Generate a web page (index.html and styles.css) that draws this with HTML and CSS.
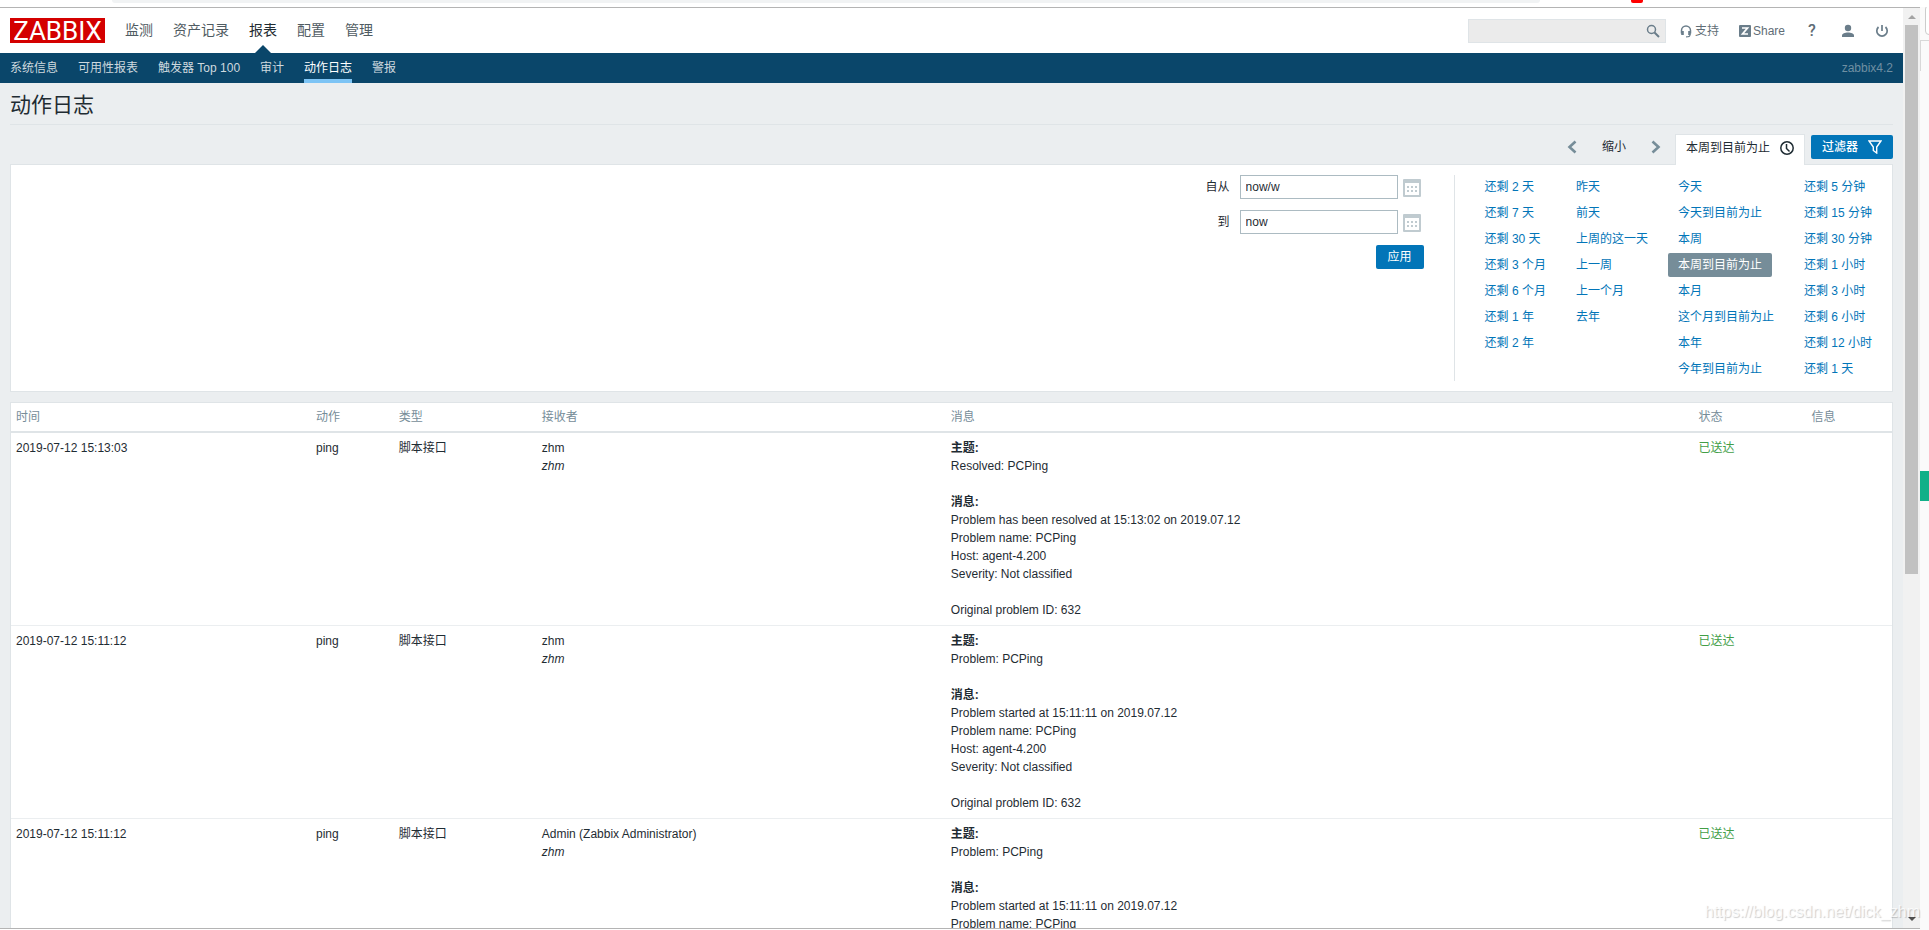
FILE: index.html
```html
<!DOCTYPE html>
<html lang="zh-CN">
<head>
<meta charset="utf-8">
<title>动作日志</title>
<link rel="stylesheet" href="styles.css">
</head>
<body>
<div class="browser-bar"><div class="address"></div><span class="ext-badge"></span></div>
<div class="screen">
  <div class="viewport">
    <div class="page">
      <header class="header">
        <a class="logo" href="#">ZABBIX</a>
        <nav class="menu">
          <a href="#">监测</a>
          <a href="#">资产记录</a>
          <a class="selected" href="#">报表</a>
          <a href="#">配置</a>
          <a href="#">管理</a>
        </nav>
        <form class="search">
          <input type="text" aria-label="搜索">
          <button type="button" aria-label="搜索"><svg width="14" height="14" viewBox="0 0 14 14" fill="none" stroke="#6a7d8a"><circle cx="5.5" cy="5.5" r="4" stroke-width="1.5"/><path d="M8.5 8.5L13 13" stroke-width="2"/></svg></button>
        </form>
        <nav class="user-menu">
          <a href="#"><svg width="12" height="14" viewBox="0 0 12 14" fill="none" stroke="#6a7d8a"><path d="M1.500 9.500V6.500a4.500 4.500 0 0 1 9 0v3" stroke-width="1.500"/><path d="M2.500 7v4M9.500 7v4" stroke-width="2.600"/><path d="M10 11C10 12.800 8.500 12.900 6 12.900" stroke-width="1.200"/></svg>支持</a>
          <a class="share" href="#"><svg width="12" height="12" viewBox="0 0 12 12"><rect width="12" height="12" rx="1" fill="#6a7d8a"/><path d="M3 3h5.500L3.500 9H9" fill="none" stroke="#fff" stroke-width="1.700"/></svg>Share</a>
          <a class="help" href="#">?</a>
          <a href="#" aria-label="用户"><svg width="14" height="14" viewBox="0 0 14 14" fill="#6a7d8a"><circle cx="7" cy="4" r="3.200"/><path d="M1 13v-1.500C1 9.500 4 8.500 7 8.500s6 1 6 3V13z"/></svg></a>
          <a href="#" aria-label="退出"><svg width="14" height="14" viewBox="0 0 14 14" fill="none" stroke="#6a7d8a" stroke-width="1.700"><path d="M3.500 3a5.200 5.200 0 1 0 7 0M7 1v6"/></svg></a>
        </nav>
      </header>
      <nav class="submenu">
        <a href="#">系统信息</a>
        <a href="#">可用性报表</a>
        <a href="#">触发器 Top 100</a>
        <a href="#">审计</a>
        <a class="selected" href="#">动作日志</a>
        <a href="#">警报</a>
        <span class="server">zabbix4.2</span>
      </nav>
      <main class="content">
        <h1>动作日志</h1>
        <div class="tabs">
          <button class="arrow" type="button" aria-label="向前"><svg width="10" height="14" viewBox="0 0 10 14"><path d="M8.500 1.500L2.500 7l6 5.500" fill="none" stroke="#768d99" stroke-width="2.600"/></svg></button>
          <button class="zoom-out" type="button">缩小</button>
          <button class="arrow" type="button" aria-label="向后"><svg width="10" height="14" viewBox="0 0 10 14"><path d="M1.500 1.500L7.500 7l-6 5.500" fill="none" stroke="#768d99" stroke-width="2.600"/></svg></button>
          <a class="tab-time" href="#">本周到目前为止<svg width="14" height="14" viewBox="0 0 14 14" fill="none" stroke="#1f2c33" stroke-width="1.500"><circle cx="7" cy="7" r="6.200"/><path d="M6.500 3v4.500L9.500 10.500"/></svg></a>
          <a class="tab-filter" href="#">过滤器<svg width="14" height="14" viewBox="0 0 14 14" fill="none" stroke="#fff" stroke-width="1.400"><path d="M1 1h12L8.700 7v6L5.300 10.500V7z"/></svg></a>
        </div>
        <section class="filter">
          <form class="range">
            <label for="from">自从</label>
            <input id="from" type="text" value="now/w">
            <button class="calendar" type="button" aria-label="日历"><svg width="18" height="18" viewBox="0 0 18 18"><path d="M1 0h16a1 1 0 0 1 1 1v16a1 1 0 0 1-1 1H1a1 1 0 0 1-1-1V1a1 1 0 0 1 1-1zM2 4v12h14V4z" fill="#c0cbd0" fill-rule="evenodd"/><path d="M4 8h10M4 12h10" stroke="#c0cbd0" stroke-width="2" stroke-dasharray="2 2"/></svg></button>
            <label for="to">到</label>
            <input id="to" type="text" value="now">
            <button class="calendar" type="button" aria-label="日历"><svg width="18" height="18" viewBox="0 0 18 18"><path d="M1 0h16a1 1 0 0 1 1 1v16a1 1 0 0 1-1 1H1a1 1 0 0 1-1-1V1a1 1 0 0 1 1-1zM2 4v12h14V4z" fill="#c0cbd0" fill-rule="evenodd"/><path d="M4 8h10M4 12h10" stroke="#c0cbd0" stroke-width="2" stroke-dasharray="2 2"/></svg></button>
            <button class="apply" type="button">应用</button>
          </form>
          <div class="quick">
            <div class="quick-col"><a href="#">还剩 2 天</a><a href="#">还剩 7 天</a><a href="#">还剩 30 天</a><a href="#">还剩 3 个月</a><a href="#">还剩 6 个月</a><a href="#">还剩 1 年</a><a href="#">还剩 2 年</a></div>
            <div class="quick-col"><a href="#">昨天</a><a href="#">前天</a><a href="#">上周的这一天</a><a href="#">上一周</a><a href="#">上一个月</a><a href="#">去年</a></div>
            <div class="quick-col"><a href="#">今天</a><a href="#">今天到目前为止</a><a href="#">本周</a><a class="selected" href="#">本周到目前为止</a><a href="#">本月</a><a href="#">这个月到目前为止</a><a href="#">本年</a><a href="#">今年到目前为止</a></div>
            <div class="quick-col"><a href="#">还剩 5 分钟</a><a href="#">还剩 15 分钟</a><a href="#">还剩 30 分钟</a><a href="#">还剩 1 小时</a><a href="#">还剩 3 小时</a><a href="#">还剩 6 小时</a><a href="#">还剩 12 小时</a><a href="#">还剩 1 天</a></div>
          </div>
        </section>
        <table class="log">
          <colgroup><col class="c-time"><col class="c-action"><col class="c-type"><col class="c-recipient"><col class="c-message"><col class="c-status"><col></colgroup>
          <thead><tr><th>时间</th><th>动作</th><th>类型</th><th>接收者</th><th>消息</th><th>状态</th><th>信息</th></tr></thead>
          <tbody>
            <tr><td>2019-07-12 15:13:03</td><td>ping</td><td>脚本接口</td><td>zhm<br><em>zhm</em></td><td><b>主题:</b><br>Resolved: PCPing<br><br><b>消息:</b><br>Problem has been resolved at 15:13:02 on 2019.07.12<br>Problem name: PCPing<br>Host: agent-4.200<br>Severity: Not classified<br><br>Original problem ID: 632</td><td class="sent">已送达</td><td></td></tr>
            <tr><td>2019-07-12 15:11:12</td><td>ping</td><td>脚本接口</td><td>zhm<br><em>zhm</em></td><td><b>主题:</b><br>Problem: PCPing<br><br><b>消息:</b><br>Problem started at 15:11:11 on 2019.07.12<br>Problem name: PCPing<br>Host: agent-4.200<br>Severity: Not classified<br><br>Original problem ID: 632</td><td class="sent">已送达</td><td></td></tr>
            <tr><td>2019-07-12 15:11:12</td><td>ping</td><td>脚本接口</td><td>Admin (Zabbix Administrator)<br><em>zhm</em></td><td><b>主题:</b><br>Problem: PCPing<br><br><b>消息:</b><br>Problem started at 15:11:11 on 2019.07.12<br>Problem name: PCPing</td><td class="sent">已送达</td><td></td></tr>
          </tbody>
        </table>
      </main>
    </div>
    <div class="scrollbar"><span class="arrow-up"></span><div class="track"><div class="thumb"></div></div><span class="arrow-down"></span></div>
  </div>
  <aside class="edge"><div class="edge-box"></div><div class="edge-tab"></div><div class="edge-green"></div></aside>
</div>
<div class="watermark">https://blog.csdn.net/dick_zhm</div>
</body>
</html>
```

FILE: styles.css
```css
* { box-sizing: border-box; }
body {
  margin: 0;
  height: 100vh;
  display: flex;
  flex-direction: column;
  overflow: hidden;
  position: relative;
  background: #fff;
  color: #1f2c33;
  font: 12px/18px "Liberation Sans", Arial, "Noto Sans CJK SC", sans-serif;
}
a { color: inherit; text-decoration: none; }
button, input { font: inherit; color: inherit; margin: 0; }
button { padding: 0; border: 0; background: none; cursor: pointer; }
svg { display: block; flex: none; }

.browser-bar { display: flex; align-items: flex-start; height: 7px; padding: 0 286px 0 112px; flex: none; }
.address { flex: 1; height: 3px; background: #f1f3f4; border-radius: 0 0 12px 12px; }
.ext-badge { width: 12px; height: 3px; margin: 0 0 0 91px; background: #f00; border-radius: 0 0 2px 2px; }

.screen { flex: 1; min-height: 0; display: flex; }
.viewport {
  flex: 1;
  min-width: 0;
  display: flex;
  margin-bottom: 1px;
  border-top: 1px solid #b4b4b4;
  border-bottom: 1px solid #b4b4b4;
}
.page { flex: 1; min-width: 0; overflow: hidden; background: #ebeef0; }

.header { display: flex; align-items: center; height: 45px; padding: 0 14px 0 10px; background: #fff; }
.logo {
  width: 95px;
  height: 25px;
  background: #d40000;
  color: #fff;
  font: 26px/26px Roboto, sans-serif;
  text-align: center;
}
.menu { display: flex; gap: 20px; margin-left: 20px; height: 100%; font-size: 14px; line-height: 45px; color: #4f5b62; }
.menu .selected { position: relative; color: #1f2c33; }
.menu .selected::after {
  content: "";
  position: absolute;
  left: 50%;
  bottom: 0;
  margin-left: -8px;
  border: 8px solid transparent;
  border-top: 0;
  border-bottom-color: #0a466a;
}
.search { display: flex; align-items: center; width: 198px; height: 24px; margin-left: auto; padding-right: 5px; background: #ebebeb; border: 1px solid #dfe4e7; }
.search input { flex: 1; min-width: 0; height: 22px; border: 0; background: none; padding: 0 5px; outline: 0; }
.user-menu { display: flex; align-items: center; margin-left: 14px; color: #5f6d76; gap: 20px; }
.user-menu a { display: flex; align-items: center; gap: 3px; }
.user-menu .share { gap: 2px; }
.user-menu .help { width: 14px; margin-right: 2px; justify-content: center; font: 500 16px/18px Roboto, sans-serif; }

.submenu { display: flex; gap: 20px; height: 30px; padding: 0 10px; background: #0a466a; color: #ced9df; line-height: 30px; }
.submenu .selected { color: #fff; border-bottom: 4px solid #7dc4f5; }
.submenu .server { margin-left: auto; color: #6f8fa2; }

.content { padding: 0 10px; }
h1 { margin: 0; height: 42px; border-bottom: 1px solid #dfe4e7; font-size: 21px; font-weight: 400; line-height: 44px; }

.tabs { display: flex; align-items: flex-start; height: 39px; padding-top: 9px; justify-content: flex-end; }
.tabs > * { height: 24px; margin-top: 1px; display: flex; align-items: center; }
.tabs .arrow { padding: 0 7px; }
.tabs .zoom-out { padding: 0 18px; }
.tabs .tab-time {
  position: relative;
  height: 31px;
  margin: 0 6px 0 9px;
  padding: 0 10px 5px;
  gap: 10px;
  border: 1px solid #dfe4e7;
  border-bottom: 0;
  background: #fff;
}
.tabs .tab-time { margin-left: 7px; }
.tab-filter { padding: 0 11px; gap: 10px; background: #0275b8; color: #fff; border-radius: 2px; font-weight: 500; }

.filter { display: flex; justify-content: flex-end; padding: 10px; background: #fff; border: 1px solid #dfe4e7; }
.range {
  display: grid;
  grid-template-columns: auto 158px 18px;
  grid-auto-rows: 24px;
  row-gap: 11px;
  align-content: start;
  align-items: center;
  padding-right: 38px;
}
.range label { text-align: right; margin-right: 10px; }
.range input { width: 158px; height: 24px; padding: 0 5px; border: 1px solid #acbbc2; background: #fff; }
.range .calendar { margin: 2px 0 0 5px; }
.apply { grid-column: 2 / 4; justify-self: end; width: 48px; height: 24px; margin-right: -8px; background: #0275b8; color: #fff; border-radius: 2px; }
.quick { display: flex; gap: 10px; padding-left: 20px; border-left: 1px solid #dfe4e7; }
.quick-col { display: flex; flex-direction: column; align-items: flex-start; gap: 2px; }
.quick-col a { padding: 0 10px; line-height: 24px; color: #0275b8; border-radius: 2px; }
.quick-col .selected { background: #768d99; color: #fff; }

.log { width: 100%; margin-top: 10px; table-layout: fixed; border-spacing: 0; background: #fff; border: 1px solid #dfe4e7; }
.c-time { width: 15.95%; }
.c-action { width: 4.4%; }
.c-type { width: 7.6%; }
.c-recipient { width: 21.75%; }
.c-message { width: 39.75%; }
.c-status { width: 6%; }
.log th { padding: 5px; border-bottom: 2px solid #dfe4e7; color: #768d99; font-weight: 400; text-align: left; }
.log td { padding: 6px 5px; border-bottom: 1px solid #ebeef0; vertical-align: top; }
.log .sent { color: #429e47; }

.scrollbar { width: 17px; display: flex; flex-direction: column; align-items: center; background: #f1f1f1; }
.arrow-up, .arrow-down { height: 4px; border: 4px solid transparent; }
.arrow-up { margin: 7px 0 6px; border-top: 0; border-bottom-color: #a3a3a3; }
.arrow-down { margin: 6px 0 7px; border-bottom: 0; border-top-color: #505050; }
.track { flex: 1; width: 13px; }
.thumb { height: 62%; background: #c1c1c1; }

.edge { width: 9px; overflow: hidden; background: #fafafa; border-top: 0; }
.edge-box { width: 20px; height: 30px; margin: -2px 0 0 5px; border: 1px solid #ccc; border-radius: 4px; background: #fff; }
.edge-tab { height: 31px; margin-top: 5px; border: 1px solid #d8d8d8; border-width: 1px 0 0 1px; }
.edge-green { height: 30px; margin-top: 400px; background: #11b088; }

.watermark {
  position: absolute;
  right: 9px;
  bottom: 7px;
  font-size: 16px;
  line-height: 22px;
  color: rgba(255, 255, 255, 0.8);
  text-shadow: 1px 1px 1px rgba(0, 0, 0, 0.2);
}
```
